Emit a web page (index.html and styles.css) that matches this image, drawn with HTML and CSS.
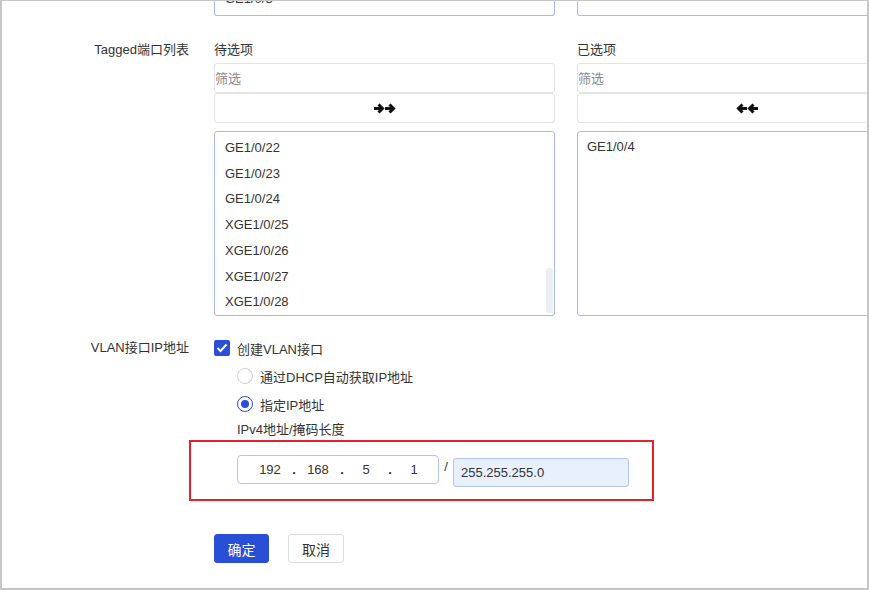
FILE: index.html
```html
<!DOCTYPE html>
<html lang="zh-CN">

<head>
  <meta charset="UTF-8" />
  <title>VLAN 配置</title>
  <link rel="stylesheet" href="styles.css">
</head>

<body>
  <div class="frame">
    <!-- previous field, scrolled mostly out of view -->
    <div class="row stub-row">
      <div class="label"></div>
      <div class="cols">
        <div class="stub"><span>GE1/0/3</span></div>
        <div class="stub"></div>
      </div>
    </div>

    <div class="row tagged-row">
      <div class="label">Tagged端口列表</div>
      <div class="cols">
        <div class="col">
          <div class="col-title">待选项</div>
          <input class="filter" placeholder="筛选">
          <button class="move">
            <svg width="23" height="13" viewBox="0 0 23 13">
              <path d="M1 6.5H9.5M5.5 2.5L9.5 6.5L5.5 10.5M12 6.5H20.5M16.5 2.5L20.5 6.5L16.5 10.5" fill="none" stroke="#111" stroke-width="3" />
            </svg>
          </button>
          <div class="list">
            <div class="item">GE1/0/22</div>
            <div class="item">GE1/0/23</div>
            <div class="item">GE1/0/24</div>
            <div class="item">XGE1/0/25</div>
            <div class="item">XGE1/0/26</div>
            <div class="item">XGE1/0/27</div>
            <div class="item">XGE1/0/28</div>
            <div class="thumb"></div>
          </div>
        </div>
        <div class="col">
          <div class="col-title">已选项</div>
          <input class="filter" placeholder="筛选">
          <button class="move">
            <svg width="23" height="13" viewBox="0 0 23 13">
              <path d="M22 6.5H13.5M17.5 2.5L13.5 6.5L17.5 10.5M11 6.5H2.5M6.5 2.5L2.5 6.5L6.5 10.5" fill="none" stroke="#111" stroke-width="3" />
            </svg>
          </button>
          <div class="list selected">
            <div class="item">GE1/0/4</div>
          </div>
        </div>
      </div>
    </div>

    <div class="row vlan-row">
      <div class="label">VLAN接口IP地址</div>
      <div class="opts">
        <label class="line">
          <span class="checkbox">
            <svg width="12" height="10" viewBox="0 0 12 10">
              <path d="M1.5 5L4.5 8L10.5 1.5" fill="none" stroke="#fff" stroke-width="2" />
            </svg>
          </span>
          创建VLAN接口
        </label>
        <div class="sub">
          <label class="line"><span class="radio"></span>通过DHCP自动获取IP地址</label>
          <label class="line"><span class="radio on"></span>指定IP地址</label>
          <div class="ip-title">IPv4地址/掩码长度</div>
          <div class="ip-row">
            <div class="ip-box">
              <span class="seg">192</span><span class="dot">.</span>
              <span class="seg">168</span><span class="dot">.</span>
              <span class="seg">5</span><span class="dot">.</span>
              <span class="seg">1</span>
            </div>
            <span class="slash">/</span>
            <div class="mask">255.255.255.0</div>
          </div>
        </div>
      </div>
    </div>

    <div class="row actions">
      <div class="label"></div>
      <button class="btn primary">确定</button>
      <button class="btn">取消</button>
    </div>

    <div class="mark"></div>
  </div>
</body>

</html>
```

FILE: styles.css
```css
body {
  margin: 0;
  font-family: 'Liberation Sans', 'Noto Sans CJK SC', sans-serif;
  font-size: 13px;
  color: #333;
  background: #fff;
}

.frame {
  position: relative;
  width: 869px;
  height: 590px;
  box-sizing: border-box;
  border: 2px solid #c6c6c6;
  border-top-width: 1px;
  overflow: hidden;
}

.row {
  display: flex;
}

.label {
  width: 187px;
  flex-shrink: 0;
  margin-right: 25px;
  text-align: right;
  line-height: 20px;
}

.cols {
  display: flex;
  gap: 22px;
}

.col,
.stub {
  width: 341px;
  flex-shrink: 0;
}

/* field above, cut off by the scroll */
.stub {
  box-sizing: border-box;
  height: 15px;
  border: 1px solid #a9b8ef;
  border-top: none;
  border-radius: 0 0 3px 3px;
  overflow: hidden;
}

.stub span {
  display: block;
  margin: -12px 0 0 10px;
  line-height: 20px;
}

.tagged-row {
  margin-top: 24px;
}

.col-title {
  line-height: 20px;
  margin-bottom: 3px;
}

.filter {
  display: block;
  width: 100%;
  height: 30px;
  box-sizing: border-box;
  border: 1px solid #e3e3e3;
  border-radius: 3px;
  padding: 0;
  font: inherit;
  outline: none;
}

.filter::placeholder {
  color: #8a8a8a;
}

.move {
  display: flex;
  align-items: center;
  justify-content: center;
  width: 100%;
  height: 30px;
  background: #fff;
  border: 1px solid #e3e3e3;
  border-radius: 3px;
  padding: 0;
}

.list {
  position: relative;
  margin-top: 8px;
  height: 185px;
  box-sizing: border-box;
  border: 1px solid #a9b8ef;
  border-radius: 3px;
  padding-top: 3px;
}

.item {
  line-height: 25.7px;
  padding-left: 10px;
}

.selected .item {
  padding-left: 9px;
  line-height: 24px;
}

.thumb {
  position: absolute;
  right: 1px;
  top: 136px;
  width: 7px;
  height: 45px;
  border-radius: 3px;
  background: #eceef2;
}

.vlan-row {
  margin-top: 18px;
}

.vlan-row .label {
  line-height: 28px;
}

.line {
  display: flex;
  align-items: center;
  height: 28px;
}

.checkbox {
  display: flex;
  align-items: center;
  justify-content: center;
  width: 16px;
  height: 16px;
  margin-right: 7px;
  border-radius: 2px;
  background: #2b4fd6;
}

.sub {
  padding-left: 23px;
}

.radio {
  box-sizing: border-box;
  width: 16px;
  height: 16px;
  margin-right: 7px;
  border: 1px solid #d3d3d3;
  border-radius: 50%;
  position: relative;
}

.radio.on {
  border-color: #2b4fd6;
}

.radio.on::after {
  content: "";
  position: absolute;
  left: 3px;
  top: 3px;
  width: 8px;
  height: 8px;
  border-radius: 50%;
  background: #2b4fd6;
}

.ip-title {
  line-height: 24px;
}

.ip-row {
  display: flex;
  align-items: flex-start;
  margin-top: 13px;
}

.ip-box {
  display: flex;
  align-items: center;
  width: 202px;
  height: 29px;
  box-sizing: border-box;
  border: 1px solid #b4c3f1;
  border-radius: 4px;
  padding-left: 14px;
}

.seg {
  width: 36px;
  text-align: center;
}

.dot {
  width: 12px;
  text-align: center;
  font-weight: bold;
}

.slash {
  width: 14px;
  text-align: center;
  line-height: 20px;
  margin-top: 2px;
}

.mask {
  margin-top: 3px;
  width: 176px;
  height: 29px;
  box-sizing: border-box;
  border: 1px solid #b4c3f1;
  border-radius: 3px;
  background: #e8effd;
  padding-left: 7px;
  line-height: 27px;
}

.actions {
  margin-top: 47px;
  gap: 19px;
}

.actions .label {
  margin-right: 6px;
}

.btn {
  height: 29px;
  width: 56px;
  border: 1px solid #dcdcdc;
  border-radius: 3px;
  background: #fff;
  font: inherit;
  font-size: 14px;
  color: #333;
  padding: 0;
}

.btn.primary {
  width: 55px;
  background: #2a4fd7;
  border-color: #2a4fd7;
  color: #fff;
}

/* red annotation box over the address inputs */
.mark {
  position: absolute;
  left: 187px;
  top: 439px;
  width: 465px;
  height: 61px;
  box-sizing: border-box;
  border: 2px solid #e0222b;
}
```
